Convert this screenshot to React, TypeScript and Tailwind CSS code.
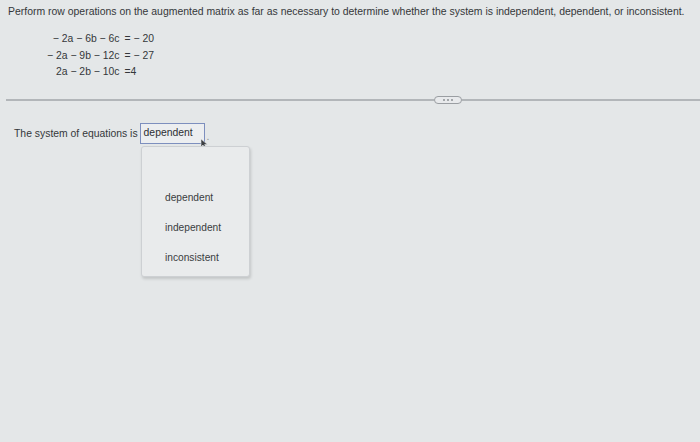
import React from "react";

const ROWS = [
  { lhs: "− 2a − 6b − 6c", rhs: "= − 20" },
  { lhs: "− 2a − 9b − 12c", rhs: "= − 27" },
  { lhs: "2a − 2b − 10c", rhs: "=4" },
];

const OPTIONS = ["dependent", "independent", "inconsistent"];

export default function App() {
  return (
    <div
      className="h-[442px] w-[700px] overflow-hidden bg-[#e4e7e8] text-[#34373a]"
      style={{ fontFamily: '"Liberation Sans", Arial, sans-serif' }}
    >
      {/* Question */}
      <p className="pl-[8px] pt-[5px] text-[10.45px] leading-[14px] whitespace-nowrap">
        Perform row operations on the augmented matrix as far as necessary to determine whether the system is independent, dependent, or inconsistent.
      </p>

      {/* System of equations */}
      <div className="ml-[47px] mt-[12px] grid w-max grid-cols-[auto_auto] gap-x-[5px] text-[10.4px] leading-[16.5px]">
        {ROWS.map((r) => (
          <React.Fragment key={r.lhs}>
            <span className="text-right">{r.lhs}</span>
            <span>{r.rhs}</span>
          </React.Fragment>
        ))}
      </div>

      {/* Divider with pill */}
      <div className="mt-[15px] flex items-center pl-[6px]">
        <div className="h-[2px] flex-1 bg-[#b2b6b9]" />
        <div className="flex h-[8px] w-[28px] items-center justify-center gap-[2px] rounded-full border border-[#9a9ea2] bg-[#e8eaec]">
          <span className="h-[2px] w-[2px] rounded-full bg-[#8d9195]" />
          <span className="h-[2px] w-[2px] rounded-full bg-[#8d9195]" />
          <span className="h-[2px] w-[2px] rounded-full bg-[#8d9195]" />
        </div>
        <div className="h-[2px] w-[238px] bg-[#b2b6b9]" />
      </div>

      {/* Answer */}
      <div className="relative mt-[19px] flex items-center pl-[14px] text-[10.4px]">
        <span>The system of equations is</span>
        <div className="ml-[2px] flex h-[21px] w-[65px] items-center border-[1.5px] border-[#7d8fbe] bg-[#eceef0] pl-[3px] text-[#2c2f33]">
          dependent
        </div>
        <span className="ml-[2px] mt-[6px] text-[#8a8e92]">.</span>

        {/* Cursor */}
        <svg
          className="absolute left-[200px] top-[15px]"
          width="9"
          height="12"
          viewBox="0 0 9 12"
        >
          <path d="M1 1 L1 9 L3 7 L5 11 L6.5 10.3 L4.6 6.6 L7.5 6.6 Z" fill="#3c3f43" stroke="#e4e7e8" strokeWidth="0.6" />
        </svg>

        {/* Dropdown */}
        <div className="absolute left-[141px] top-[23px] flex h-[131px] w-[109px] flex-col gap-[17px] rounded-[3px] border border-[#cdd0d3] bg-[#e9ebec] pl-[23px] pt-[44px] text-[10.2px] text-[#3a3d41] shadow-[1px_2px_3px_rgba(0,0,0,0.15)]">
          {OPTIONS.map((o) => (
            <span key={o} className="leading-[13px]">
              {o}
            </span>
          ))}
        </div>
      </div>
    </div>
  );
}
